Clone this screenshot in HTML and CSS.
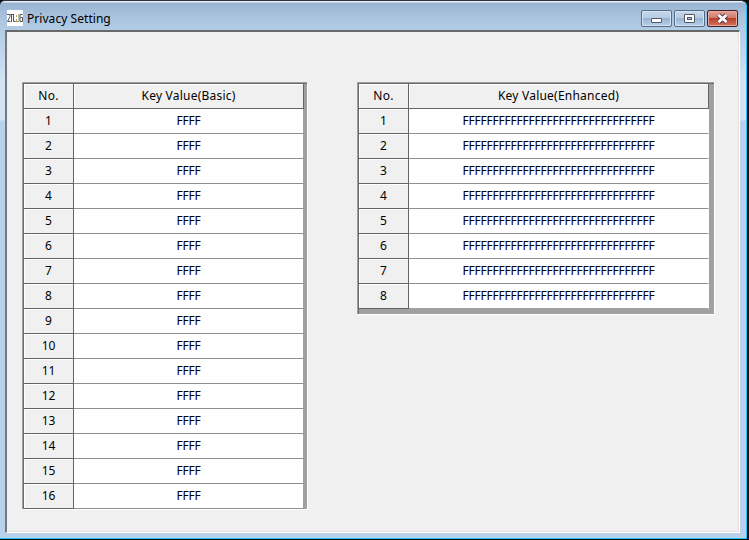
FILE: index.html
```
<!DOCTYPE html>
<html lang="en">
<head>
<meta charset="utf-8">
<title>Privacy Setting</title>
<link rel="stylesheet" href="styles.css">
</head>
<body>
<div class="window">
  <header class="titlebar">
    <svg class="app-icon" width="16" height="16" viewBox="0 0 16 16"><rect width="16" height="16" fill="#fff"/><g fill="none" stroke="#444" stroke-width=".9"><path d="M0 4.500h3v2L.5 11.500h3M4.500 4v8M3.500 4.500h3M6.500 4v7.500h2M15.500 4.500h-2.500v7h2.500v-4h-2"/></g><path d="M9.500 5v2M9.500 9v3" stroke="#b9a24c"/><path d="M11 4.500h1v3h-1M12 8v3.500h-2" fill="none" stroke="#777" stroke-width=".7"/></svg>
    <h1 class="title">Privacy Setting</h1>
    <div class="controls">
      <button class="control" aria-label="Minimize"><svg width="29" height="15" viewBox="0 0 29 15"><rect x="9.500" y="7.500" width="10" height="4" rx=".5" fill="#fff" stroke="#535666"/></svg></button>
      <button class="control" aria-label="Maximize"><svg width="29" height="15" viewBox="0 0 29 15"><rect x="9.500" y="3.500" width="10" height="8" rx=".5" fill="#fff" stroke="#535666"/><rect x="12.500" y="6.500" width="4" height="2" fill="#a9bfd7" stroke="#535666"/></svg></button>
      <button class="control close" aria-label="Close"><svg width="29" height="15" viewBox="0 0 29 15"><path d="M10.500 4l8 7M18.500 4l-8 7" stroke="#53404b" stroke-width="4.800"/><path d="M10.500 4l8 7M18.500 4l-8 7" stroke="#fff" stroke-width="2.800"/></svg></button>
    </div>
  </header>
  <main class="client">
    <table class="grid basic">
      <thead><tr><th>No.</th><th>Key Value(Basic)</th></tr></thead>
      <tbody>
        <tr><th>1</th><td>FFFF</td></tr>
        <tr><th>2</th><td>FFFF</td></tr>
        <tr><th>3</th><td>FFFF</td></tr>
        <tr><th>4</th><td>FFFF</td></tr>
        <tr><th>5</th><td>FFFF</td></tr>
        <tr><th>6</th><td>FFFF</td></tr>
        <tr><th>7</th><td>FFFF</td></tr>
        <tr><th>8</th><td>FFFF</td></tr>
        <tr><th>9</th><td>FFFF</td></tr>
        <tr><th>10</th><td>FFFF</td></tr>
        <tr><th>11</th><td>FFFF</td></tr>
        <tr><th>12</th><td>FFFF</td></tr>
        <tr><th>13</th><td>FFFF</td></tr>
        <tr><th>14</th><td>FFFF</td></tr>
        <tr><th>15</th><td>FFFF</td></tr>
        <tr><th>16</th><td>FFFF</td></tr>
      </tbody>
    </table>
    <table class="grid enhanced">
      <thead><tr><th>No.</th><th>Key Value(Enhanced)</th></tr></thead>
      <tbody>
        <tr><th>1</th><td>FFFFFFFFFFFFFFFFFFFFFFFFFFFFFFFF</td></tr>
        <tr><th>2</th><td>FFFFFFFFFFFFFFFFFFFFFFFFFFFFFFFF</td></tr>
        <tr><th>3</th><td>FFFFFFFFFFFFFFFFFFFFFFFFFFFFFFFF</td></tr>
        <tr><th>4</th><td>FFFFFFFFFFFFFFFFFFFFFFFFFFFFFFFF</td></tr>
        <tr><th>5</th><td>FFFFFFFFFFFFFFFFFFFFFFFFFFFFFFFF</td></tr>
        <tr><th>6</th><td>FFFFFFFFFFFFFFFFFFFFFFFFFFFFFFFF</td></tr>
        <tr><th>7</th><td>FFFFFFFFFFFFFFFFFFFFFFFFFFFFFFFF</td></tr>
        <tr><th>8</th><td>FFFFFFFFFFFFFFFFFFFFFFFFFFFFFFFF</td></tr>
      </tbody>
    </table>
  </main>
</div>
</body>
</html>
```
FILE: styles.css
```
* { box-sizing: border-box; }

body {
  margin: 0;
  overflow: hidden;
  background: #0a0c10;
  font: 12px/16px "Noto Sans", sans-serif;
  color: #000;
}

.window {
  width: 747px;
  height: 539px;
  padding: 0 6px 5px 5px;
  border-top: 1px solid #303338;
  border-right: 1px solid #1fc4f4;
  border-bottom: 1px solid #1fc4f4;
  border-radius: 5px 6px 0 0;
  background: linear-gradient(#e4eef8 0, #e4eef8 1px, #99b4d1 2px, #a9c3de 16px, #b3cce5 29px, #d3e3f3 80px, #d3e3f3 119px, #b9d1ea 120px);
}

.titlebar {
  display: flex;
  align-items: flex-start;
  height: 29px;
  padding: 9px 0 0 2px;
}

.app-icon { display: block; flex: none; }

.title {
  margin: 1px 0 0 4px;
  font-size: 12px;
  line-height: 16px;
  font-weight: 400;
  letter-spacing: 0.05px;
}

.controls {
  display: flex;
  gap: 2px;
  margin-left: auto;
  margin-right: 2px;
}

.control {
  width: 31px;
  height: 17px;
  padding: 0;
  border: 1px solid #566b86;
  border-radius: 2px;
  background: linear-gradient(#c5d8ec 0, #b5cce4 45%, #98b4d2 50%, #b5d0ea 100%);
  box-shadow: inset 0 0 0 1px #d5e4f3;
}

.control svg { display: block; }

.close {
  border-color: #431e24;
  background: linear-gradient(#e3a297 0, #d37a6c 45%, #b9402c 50%, #d4705a 100%);
  box-shadow: inset 0 0 0 1px #e7aca0;
}

.client {
  display: flex;
  align-items: flex-start;
  gap: 50px;
  height: 503px;
  padding: 50px 0 0 15px;
  border: 1px solid #fff;
  border-top: 2px solid #696969;
  border-left: 2px solid #747880;
  background: #f0f0f0;
  box-shadow: inset -1px -1px #e9e1dc;
}

.grid {
  border-collapse: separate;
  border-spacing: 0;
  table-layout: fixed;
  border-top: 1px solid #a0a0a0;
  border-left: 1px solid #a0a0a0;
  box-shadow: inset 1px 1px #696969, 1px 1px #fff;
  background: #a0a0a0;
}

.basic { width: 285px; padding: 1px 3px 0 1px; }
.enhanced { width: 357px; padding: 1px 5px 5px 1px; }

.grid th,
.grid td {
  height: 25px;
  padding: 0 0 1px;
  text-align: center;
  font-weight: 400;
}

.grid th {
  background: #f0f0f0;
  border-right: 1px solid #646464;
  border-bottom: 1px solid #646464;
  box-shadow: inset 1px 1px #fff;
}

.grid thead th { letter-spacing: 0.22px; }

.grid th:first-child { width: 50px; }

.grid td {
  background: #fff;
  border-right: 1px solid #fff;
  border-bottom: 1px solid #909090;
  letter-spacing: -0.23px;
}

.basic td { border-right-color: #a0a0a0; }

.enhanced tr:last-child td { border-bottom-color: #a0a0a0; }
```
